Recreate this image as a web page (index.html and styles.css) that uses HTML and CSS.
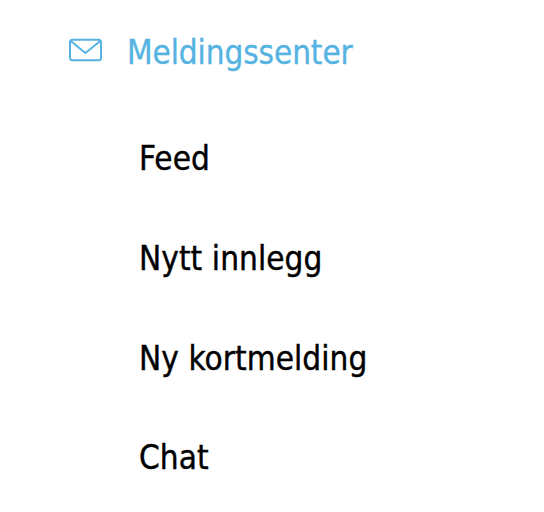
FILE: index.html
```
<!DOCTYPE html>
<html lang="no">
<head>
    <meta charset="UTF-8">
    <meta name="viewport" content="width=device-width, initial-scale=1.0">
    <title>Meldingssenter</title>
    <link rel="stylesheet" href="styles.css">
</head>
<body>
    <nav class="menu">
        <div class="menu-header">
            <svg class="menu-icon" viewBox="0 0 34 24" width="34" height="24">
                <rect x="2" y="1.7" width="31" height="20.6" rx="2.5"/>
                <path d="M3 3.2 L17.4 15 L32 3.2"/>
            </svg>
            <span class="menu-title">Meldingssenter</span>
        </div>
        <ul class="menu-list">
            <li>Feed</li>
            <li>Nytt innlegg</li>
            <li>Ny kortmelding</li>
            <li>Chat</li>
        </ul>
    </nav>
</body>
</html>
```

FILE: styles.css
```
body {
    margin: 0;
    font-family: "DejaVu Sans Condensed", "DejaVu Sans", Verdana, sans-serif;
    font-size: 33px;
    background-color: #fff;
    color: #000;
}
.menu {
    padding: 32px 0 0 68px;
}
.menu-header {
    display: flex;
    align-items: center;
    height: 40px;
    color: #55b3e2;
}
.menu-icon {
    margin: -5px 25px 0 0;
    fill: none;
    stroke: currentColor;
    stroke-width: 2;
}
.menu-title {
    letter-spacing: -0.1px;
    -webkit-text-stroke: 0.3px;
}
.menu-list {
    list-style-type: none;
    margin: 37px 0 0 71px;
    padding: 0;
    letter-spacing: 0.07px;
    -webkit-text-stroke: 0.4px;
}
.menu-list li {
    height: 99.8px;
    line-height: 100px;
}
```
